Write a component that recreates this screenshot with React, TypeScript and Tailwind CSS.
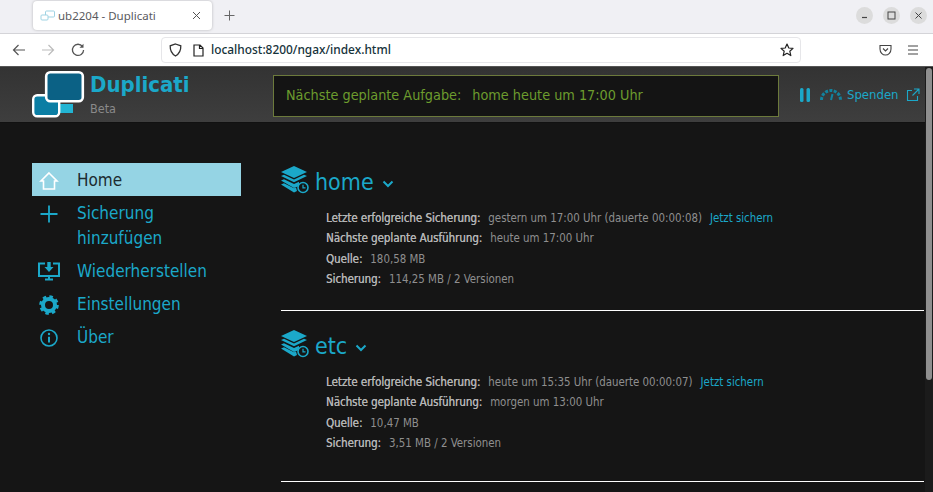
import React from "react";

const UI = "font-['Noto_Sans',sans-serif]";
const PAGE = "font-['DejaVu_Sans_Condensed','DejaVu_Sans',sans-serif]";

function StackIcon() {
  return (
    <svg width="30" height="30" viewBox="0 0 30 30" className="shrink-0 ml-[-1px]">
      <path d="M14 1 L27 7 L14 13 L1 7 Z" fill="#1ba8c9" />
      <path d="M1 11 L4 9.8 L14 14.6 L24 9.8 L27 11 L14 17.2 Z" fill="#1ba8c9" />
      <path d="M1 15.5 L4 14.2 L14 19 L19 16.8 L19 21 L14 23 Z" fill="#1ba8c9" />
      <path d="M1 19.5 L4 18.2 L14 23.2 L16 22.5 L17 26 L14 27.5 Z" fill="#1ba8c9" />
      <circle cx="23" cy="22.5" r="5" fill="none" stroke="#1ba8c9" strokeWidth="1.6" />
      <path d="M23 19.8 V22.8 H25.5" fill="none" stroke="#1ba8c9" strokeWidth="1.2" />
    </svg>
  );
}

function Chevron() {
  return (
    <svg width="12" height="8" viewBox="0 0 12 8" className="ml-[8px] mt-[7px]">
      <path d="M1.5 1.5 L6 6 L10.5 1.5" fill="none" stroke="#1ba8c9" strokeWidth="2" />
    </svg>
  );
}

function Backup({ name, rows, link, bottom }: { name: string; rows: [string, string][]; link: string; bottom: string }) {
  return (
    <section className={`border-b border-white ${bottom}`}>
      <div className="flex items-center h-[30px] text-[#1ba8c9]">
        <StackIcon />
        <span className="ml-[5px] text-[23px] leading-[30px] mt-[3px]">{name}</span>
        <Chevron />
      </div>
      <div className="ml-[45px] mt-[13px] text-[11.4px] leading-[20.3px] text-[#8f8f8f]">
        {rows.map(([k, v], i) => (
          <div key={k} className="flex whitespace-pre">
            <span className="text-[#b4b4b4] [text-shadow:0.3px_0_0_#b4b4b4]">{k}:</span>
            <span className="ml-[8px]">{v}</span>
            {i === 0 && <span className="ml-[8px] text-[#1ba8c9]">{link}</span>}
          </div>
        ))}
      </div>
    </section>
  );
}

function NavItem({ icon, label, active }: { icon: React.ReactNode; label: React.ReactNode; active?: boolean }) {
  return (
    <div className={`flex items-start pt-[5px] pb-[3px] text-[17px] leading-[25px] ${active ? "bg-[#95d4e4] text-[#1c2b30]" : "text-[#1ba8c9]"}`}>
      <div className="w-[34px] h-[25px] flex items-center justify-center shrink-0">{icon}</div>
      <div className="ml-[11px]">{label}</div>
    </div>
  );
}

export default function App() {
  return (
    <div className={`relative w-[933px] h-[492px] overflow-hidden bg-[#151515] ${UI}`}>
      {/* Tab strip */}
      <div className="h-[33px] bg-[#f0f0f4] flex items-center border-b border-[#d4d4d8] box-content">
        <div className="ml-[33px] mt-[-2px] w-[179px] h-[29px] bg-white rounded-[4px] shadow-[0_0_3px_rgba(0,0,0,0.25)] flex items-center px-[7px] text-[11.5px] text-[#5a5a5e]">
          <svg width="16" height="12" viewBox="0 0 16 12" className="mr-[2px]">
            <rect x="5.5" y="1" width="9" height="6" rx="1" fill="#fff" stroke="#9fd3e3" />
            <rect x="1" y="5" width="7" height="5" rx="1" fill="#fff" stroke="#9fd3e3" />
          </svg>
          <span>ub2204 - Duplicati</span>
          <svg width="9" height="9" viewBox="0 0 9 9" className="ml-auto mr-[4px]">
            <path d="M1 1 L8 8 M8 1 L1 8" stroke="#555" strokeWidth="1" />
          </svg>
        </div>
        <svg width="11" height="11" viewBox="0 0 11 11" className="ml-[12px] mt-[-2px]">
          <path d="M5.5 0.5 V10.5 M0.5 5.5 H10.5" stroke="#666" strokeWidth="1" />
        </svg>
        <div className="ml-auto mr-[6px] flex gap-[10px] mt-[-2px]">
          {[
            <path key="a" d="M4 8.5 H9" stroke="#444" strokeWidth="1.2" />,
            <rect key="b" x="3" y="3" width="7" height="7" fill="none" stroke="#444" strokeWidth="1" />,
            <path key="c" d="M3.5 3.5 L9.5 9.5 M9.5 3.5 L3.5 9.5" stroke="#444" strokeWidth="1" />,
          ].map((p, i) => (
            <div key={i} className="w-[17px] h-[17px] rounded-full bg-[#dcdcdc] flex items-center justify-center">
              <svg width="13" height="13" viewBox="0 0 13 13">{p}</svg>
            </div>
          ))}
        </div>
      </div>

      {/* Toolbar */}
      <div className="h-[33px] bg-white flex items-center border-b border-[#555]">
        <div className="w-[161px] flex items-center pl-[12px] shrink-0">
          <svg width="14" height="12" viewBox="0 0 14 12">
            <path d="M13 6 H1.5 M6.5 1 L1.5 6 L6.5 11" fill="none" stroke="#555" strokeWidth="1.2" />
          </svg>
          <svg width="14" height="12" viewBox="0 0 14 12" className="ml-[15px]">
            <path d="M1 6 H12.5 M7.5 1 L12.5 6 L7.5 11" fill="none" stroke="#bbb" strokeWidth="1.2" />
          </svg>
          <svg width="14" height="14" viewBox="0 0 14 14" className="ml-[16px]">
            <path d="M11.5 3.5 A5.6 5.6 0 1 0 12.6 7" fill="none" stroke="#555" strokeWidth="1.3" />
            <path d="M8.5 4.8 H12.5 V0.8 Z" fill="#555" />
          </svg>
        </div>
        <div className="w-[640px] h-[26px] bg-white rounded-[4px] border border-[#e6e6e9] flex items-center text-[11.9px] font-medium text-[#15323a] shrink-0">
          <svg width="13" height="14" viewBox="0 0 13 14" className="ml-[7px]">
            <path d="M6.5 1 L11.8 2.8 C12 7.5 10 11 6.5 13 C3 11 1 7.5 1.2 2.8 Z" fill="none" stroke="#333" strokeWidth="1.3" />
          </svg>
          <svg width="11" height="13" viewBox="0 0 11 13" className="ml-[11px]">
            <path d="M1 1 H7 L10 4 V12 H1 Z M6.5 1 V4.5 H10" fill="none" stroke="#222" strokeWidth="1.2" />
          </svg>
          <span className="ml-[7px]">localhost:8200/ngax/index.html</span>
          <svg width="14" height="14" viewBox="0 0 14 14" className="ml-auto mr-[6px]">
            <path d="M7 1 L8.8 5 L13 5.4 L9.8 8.2 L10.8 12.6 L7 10.3 L3.2 12.6 L4.2 8.2 L1 5.4 L5.2 5 Z" fill="none" stroke="#222" strokeWidth="1.2" strokeLinejoin="round" />
          </svg>
        </div>
        <svg width="13" height="12" viewBox="0 0 13 12" className="ml-[78px] shrink-0">
          <path d="M1 1.5 H12 V5 C12 8.5 9.5 11 6.5 11 C3.5 11 1 8.5 1 5 Z M4 4.5 L6.5 7 L9 4.5" fill="none" stroke="#444" strokeWidth="1.1" />
        </svg>
        <svg width="12" height="10" viewBox="0 0 12 10" className="ml-[15px] shrink-0">
          <path d="M1 1 H11 M1 5 H11 M1 9 H11" stroke="#444" strokeWidth="1.1" />
        </svg>
      </div>

      {/* Page */}
      <div className={PAGE}>
        <header className="h-[56px] bg-gradient-to-b from-[#333333] to-[#3e3e3e] flex items-center border-b border-[#111]">
          <div className="w-[273px] pl-[32px] flex items-center shrink-0">
            <svg width="53" height="48" viewBox="0 0 53 48" className="mt-[-2px] shrink-0">
              <rect x="26" y="34" width="15" height="9" fill="#22b4d3" />
              <rect x="1.2" y="25.2" width="26" height="21" rx="4" fill="#0b7ea4" stroke="#fff" strokeWidth="2.4" />
              <rect x="14.2" y="2.2" width="36.6" height="29" rx="4" fill="#0b6185" stroke="#fff" strokeWidth="2.6" />
            </svg>
            <div className="ml-[5px] mt-[-2px]">
              <div className="text-[22px] leading-[28px] font-bold text-[#1ba8c9]">Duplicati</div>
              <div className="text-[12.5px] leading-[16px] mt-[2px] text-[#8a8a8a]">Beta</div>
            </div>
          </div>
          <div className="w-[506px] h-[42px] mt-[3px] bg-[#141414] border border-[#6c7a3c] flex items-center pl-[12px] text-[14.3px] text-[#6d9c2e] whitespace-pre shrink-0">
            <span>Nächste geplante Aufgabe:</span>
            <span className="ml-[11px]">home heute um 17:00 Uhr</span>
          </div>
          <svg width="10" height="14" viewBox="0 0 10 14" className="ml-[21px] mt-[1px] shrink-0">
            <rect x="0" y="0" width="3.5" height="14" rx="1.5" fill="#1ba8c9" />
            <rect x="6.5" y="0" width="3.5" height="14" rx="1.5" fill="#1ba8c9" />
          </svg>
          <svg width="22" height="12" viewBox="0 0 22 12" className="ml-[10px] shrink-0">
            <path d="M1.5 11 A9.5 9.5 0 0 1 20.5 11" fill="none" stroke="#12839e" strokeWidth="3" strokeDasharray="3 1.4" />
            <path d="M11 11 L12.5 5" stroke="#12839e" strokeWidth="2" />
          </svg>
          <span className="ml-[5px] pt-[1px] text-[13px] text-[#1ba8c9]">Spenden</span>
          <svg width="14" height="14" viewBox="0 0 14 14" className="ml-[7px] shrink-0">
            <path d="M11.5 8 V12.5 H1.5 V2.5 H6 M8 1 H13 V6 M13 1 L6.5 7.5" fill="none" stroke="#1ba8c9" strokeWidth="1.1" />
          </svg>
        </header>

        <div className="flex">
          <nav className="w-[209px] ml-[32px] mt-[40px] shrink-0">
            <NavItem
              active
              label="Home"
              icon={
                <svg width="20" height="20" viewBox="0 0 20 20">
                  <path d="M10 2 L18 10 H15.5 V18 H4.5 V10 H2 Z" fill="none" stroke="#fff" strokeWidth="1.6" />
                </svg>
              }
            />
            <NavItem
              label={<>Sicherung<br />hinzufügen</>}
              icon={
                <svg width="18" height="18" viewBox="0 0 18 18">
                  <path d="M9 0.5 V17.5 M0.5 9 H17.5" stroke="#1ba8c9" strokeWidth="1.8" />
                </svg>
              }
            />
            <NavItem
              label="Wiederherstellen"
              icon={
                <svg width="22" height="21" viewBox="0 0 22 21">
                  <path d="M7 2.5 H1 V15 H21 V2.5 H15 M7 18.5 H15 M11 15 V18.5" fill="none" stroke="#1ba8c9" strokeWidth="2" />
                  <path d="M9.3 1 H12.7 V6 H15.5 L11 11 L6.5 6 H9.3 Z" fill="#1ba8c9" />
                </svg>
              }
            />
            <NavItem
              label="Einstellungen"
              icon={
                <svg width="20" height="20" viewBox="0 0 20 20">
                  <circle cx="10" cy="10" r="6" fill="none" stroke="#1ba8c9" strokeWidth="4" />
                  <circle cx="10" cy="10" r="8" fill="none" stroke="#1ba8c9" strokeWidth="3.6" strokeDasharray="3.3 3" />
                </svg>
              }
            />
            <NavItem
              label="Über"
              icon={
                <svg width="18" height="18" viewBox="0 0 18 18">
                  <circle cx="9" cy="9" r="8" fill="none" stroke="#1ba8c9" strokeWidth="1.6" />
                  <circle cx="9" cy="5" r="1.2" fill="#1ba8c9" />
                  <path d="M9 7.8 V13.5" stroke="#1ba8c9" strokeWidth="2" />
                </svg>
              }
            />
          </nav>

          <main className="ml-[40px] w-[643px] mt-[42px] flex flex-col gap-[18px] shrink-0">
            <Backup
              name="home"
              link="Jetzt sichern"
              bottom="pb-[21px]"
              rows={[
                ["Letzte erfolgreiche Sicherung", "gestern um 17:00 Uhr (dauerte 00:00:08)"],
                ["Nächste geplante Ausführung", "heute um 17:00 Uhr"],
                ["Quelle", "180,58 MB"],
                ["Sicherung", "114,25 MB / 2 Versionen"],
              ]}
            />
            <Backup
              name="etc"
              link="Jetzt sichern"
              bottom="pb-[28px]"
              rows={[
                ["Letzte erfolgreiche Sicherung", "heute um 15:35 Uhr (dauerte 00:00:07)"],
                ["Nächste geplante Ausführung", "morgen um 13:00 Uhr"],
                ["Quelle", "10,47 MB"],
                ["Sicherung", "3,51 MB / 2 Versionen"],
              ]}
            />
          </main>
        </div>
      </div>

      {/* Scrollbar */}
      <div className="absolute left-[925px] top-[67px] w-[8px] h-[425px] bg-[#1b1b1b]">
        <div className="ml-[1px] mt-[1px] w-[6px] h-[312px] rounded-[3px] bg-[#8f8f8f]" />
      </div>
    </div>
  );
}
